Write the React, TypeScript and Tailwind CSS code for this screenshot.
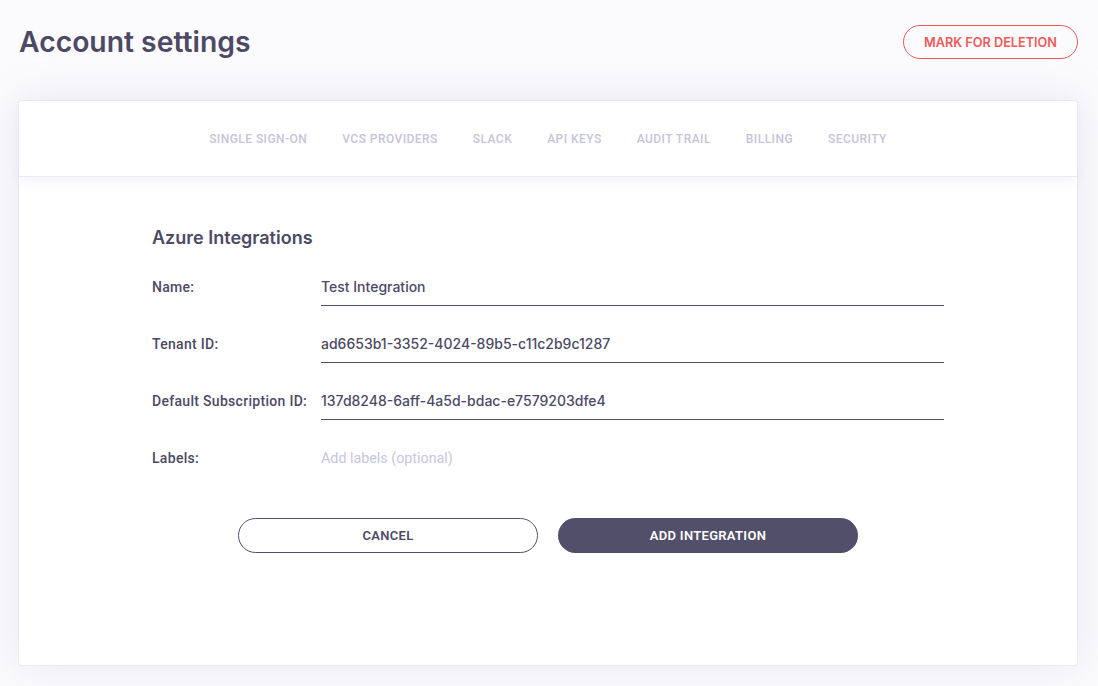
const tabs = ["Single sign-on", "VCS providers", "Slack", "API keys", "Audit trail", "Billing", "Security"];

const fields = [
  { label: "Name:", value: "Test Integration" },
  { label: "Tenant ID:", value: "ad6653b1-3352-4024-89b5-c11c2b9c1287" },
  { label: "Default Subscription ID:", value: "137d8248-6aff-4a5d-bdac-e7579203dfe4" },
];

export default function App() {
  return (
    <div className="w-full min-h-screen bg-[#fbfbfd] text-[#4d4965] font-['Inter',sans-serif]">
      {/* header */}
      <div className="flex justify-between items-start pl-[19px] pr-[20px] pt-[25px] h-[100px]">
        <h1 className="text-[28.3px] font-semibold leading-[34px]">Account settings</h1>
        <button className="h-[34px] w-[175px] rounded-full border border-[#f05a5a] text-[#f05a5a] text-[12.7px] font-semibold uppercase pt-[1px]">
          Mark for deletion
        </button>
      </div>

      {/* card */}
      <div className="ml-[18px] mr-[20px] h-[566px] bg-white border border-[#ebeaf2] rounded-[3px] shadow-[0_0_40px_rgba(200,198,225,0.35)] flex flex-col">
        <nav className="h-[76px] border-b border-[#ebeaf2] shadow-[0_4px_12px_rgba(210,208,230,0.25)] flex items-center justify-center gap-[35px] font-['Roboto',sans-serif] text-[12px] font-medium uppercase tracking-[0.45px] text-[#c6c4d9]">
          {tabs.map((t) => (
            <span key={t}>{t}</span>
          ))}
        </nav>

        <div className="w-[792px] mx-auto pt-[49px]">
          <h2 className="text-[18px] font-semibold leading-[24px] mb-[27px]">Azure Integrations</h2>
          <div className="flex flex-col gap-[28px]">
            {fields.map((f) => (
              <div key={f.label} className="flex items-start">
                <label className="w-[169px] leading-[20px] font-['Roboto',sans-serif] text-[14px] font-medium tracking-[0.3px]">{f.label}</label>
                <div className="flex-1 h-[29px] border-b border-[#524f6a] leading-[20px] text-[14px] font-medium">
                  {f.value}
                </div>
              </div>
            ))}
            <div className="flex items-start">
              <label className="w-[169px] leading-[20px] font-['Roboto',sans-serif] text-[14px] font-medium tracking-[0.3px]">Labels:</label>
              <div className="flex-1 leading-[20px] font-['Roboto',sans-serif] text-[14.3px] text-[#c9c6dc]">Add labels (optional)</div>
            </div>
          </div>

          <div className="flex justify-center gap-[20px] mt-[50px]">
            <button className="w-[300px] h-[35px] rounded-full border border-[#524f6a] bg-white font-['Roboto',sans-serif] text-[13px] font-semibold uppercase tracking-[0.3px] text-[#4d4965]">
              Cancel
            </button>
            <button className="w-[300px] h-[35px] rounded-full bg-[#524f6a] font-['Roboto',sans-serif] text-[13px] font-semibold uppercase tracking-[0.3px] text-white">
              Add integration
            </button>
          </div>
        </div>
      </div>
    </div>
  );
}
